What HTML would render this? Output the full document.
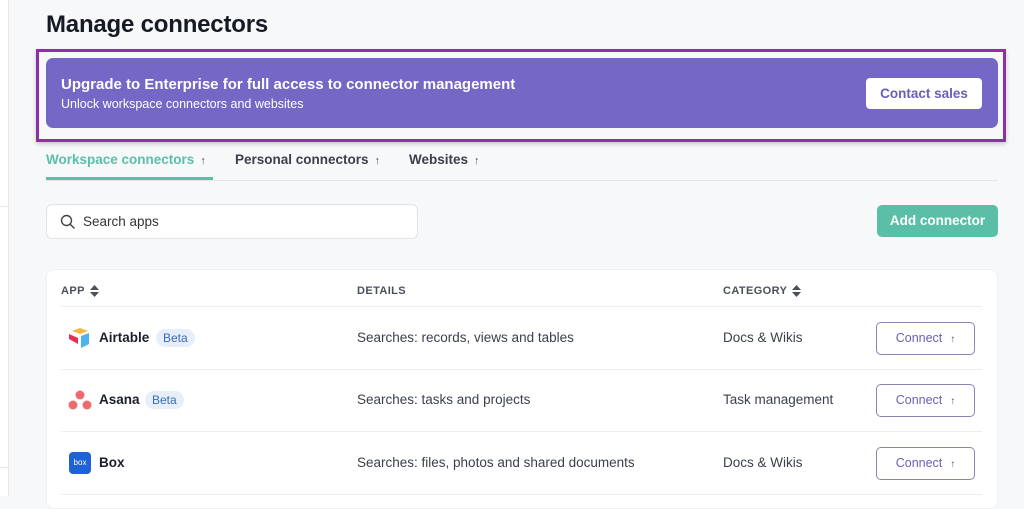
<!DOCTYPE html><html><head><style>
*{box-sizing:border-box;margin:0;padding:0}
body{width:1024px;height:496px;overflow:hidden;background:#f7f8fa;font-family:"Liberation Sans",sans-serif;position:relative;color:#1d2330}
.abs{position:absolute}
.lp{left:0;top:0;width:9px;height:496px;background:#fff;border-right:1px solid #e6e8ec}
h1{position:absolute;left:46px;top:11px;font-size:24px;font-weight:700;color:#151a24;letter-spacing:-0.2px}
.frame{left:36px;top:49px;width:970px;height:93px;border:3px solid #8e2fa8;box-shadow:0 2px 4px rgba(0,0,0,.2)}
.ban{left:46px;top:58px;width:952px;height:70px;background:#7467c6;border-radius:7px;color:#fff}
.ban .t{position:absolute;left:15px;top:18px;font-size:15px;font-weight:700}
.ban .s{position:absolute;left:15px;top:39px;font-size:12.5px}
.cs{position:absolute;left:820px;top:20px;width:116px;height:31px;background:#fff;border-radius:4px;color:#6a5fb8;font-weight:700;font-size:13.5px;text-align:center;line-height:31px}
.tab{top:152px;font-size:13.5px;font-weight:700;color:#3a3f4a}
.tab small{font-size:11px;margin-left:6px;color:#555}
.search{left:46px;top:204px;width:372px;height:35px;background:#fff;border:1px solid #dfe2e7;border-radius:6px}
.search span{position:absolute;left:36px;top:9px;font-size:13.5px;color:#333}
.add{left:877px;top:205px;width:121px;height:32px;background:#5bbfa8;border-radius:5px;color:#fff;font-weight:700;font-size:13.5px;text-align:center;line-height:32px}
.card{left:46px;top:269px;width:952px;height:240px;background:#fff;border-radius:8px;border:1px solid #eef0f3}
.hd{top:283px;height:16px;display:flex;align-items:center;font-size:11px;font-weight:700;color:#4a4f5a;letter-spacing:.4px}
.hd svg{margin-left:5px}
.line{left:61px;width:921px;height:1px;background:#eceef1}
.name{font-size:13.5px;font-weight:700;color:#1a1f29}
.beta{font-size:12px;color:#3b6bb0;background:#e6eff9;border-radius:10px;padding:2px 7px}
.txt{font-size:13.5px;color:#3a3f4a}
.btn{left:876px;width:99px;height:33px;border:1px solid #8a84b4;border-radius:5px;font-size:12.5px;color:#6a5fb8;text-align:center;line-height:31px}
.btn small{font-size:10px;margin-left:8px;color:#555}
</style></head><body>
<div class="abs lp"></div>
<div class="abs" style="left:0;top:206px;width:9px;height:1px;background:#e6e8ec"></div>
<div class="abs" style="left:0;top:467px;width:9px;height:1px;background:#e6e8ec"></div>
<h1>Manage connectors</h1>
<div class="abs frame"></div>
<div class="abs ban"><div class="t">Upgrade to Enterprise for full access to connector management</div><div class="s">Unlock workspace connectors and websites</div><div class="cs">Contact sales</div></div>
<div class="abs tab" style="left:46px;color:#5bbfa8">Workspace connectors<small>↑</small></div>
<div class="abs tab" style="left:235px">Personal connectors<small>↑</small></div>
<div class="abs tab" style="left:409px">Websites<small>↑</small></div>
<div class="abs" style="left:46px;top:180px;width:952px;height:1px;background:#e2e4e8"></div>
<div class="abs" style="left:46px;top:177px;width:167px;height:3px;background:#5bbfa8"></div>
<div class="abs search"><svg class="abs" style="left:13px;top:9px" width="16" height="16" viewBox="0 0 16 16"><circle cx="6.5" cy="6.5" r="5" fill="none" stroke="#444" stroke-width="1.4"/><path d="M10.2 10.2L14.5 14.5" stroke="#444" stroke-width="1.4"/></svg><span>Search apps</span></div>
<div class="abs add">Add connector</div>
<div class="abs card"></div>
<div class="abs hd" style="left:61px">APP<svg width="9" height="12" viewBox="0 0 9 12"><path d="M4.5 0L9 5H0Z M4.5 12L0 7H9Z" fill="#4a4f5a"/></svg></div>
<div class="abs hd" style="left:357px">DETAILS</div>
<div class="abs hd" style="left:723px">CATEGORY<svg width="9" height="12" viewBox="0 0 9 12"><path d="M4.5 0L9 5H0Z M4.5 12L0 7H9Z" fill="#4a4f5a"/></svg></div>
<div class="abs line" style="top:306px"></div>
<div class="abs line" style="top:369px"></div>
<div class="abs line" style="top:431px"></div>
<div class="abs line" style="top:494px"></div>
<svg class="abs" style="left:68px;top:327px" width="24" height="23" viewBox="0 0 24 23"><path d="M4 4L12 1L20 4L12 7Z" fill="#f4b942"/><path d="M13 9L21 6V17L13 21Z" fill="#4db3f0"/><path d="M1 7L10 11V17L1 12Z" fill="#e0334f"/></svg>
<div class="abs name" style="left:99px;top:330px">Airtable</div>
<div class="abs beta" style="left:156px;top:329px">Beta</div>
<svg class="abs" style="left:68px;top:389px" width="24" height="22" viewBox="0 0 24 22"><circle cx="12" cy="6" r="4.5" fill="#ec6a70"/><circle cx="5" cy="16" r="4.5" fill="#ec6a70"/><circle cx="19" cy="16" r="4.5" fill="#ec6a70"/></svg>
<div class="abs name" style="left:99px;top:392px">Asana</div>
<div class="abs beta" style="left:145px;top:391px">Beta</div>
<div class="abs" style="left:69px;top:452px;width:22px;height:22px;background:#1f62d8;border-radius:4px;color:#fff;font-size:8px;text-align:center;line-height:22px">box</div>
<div class="abs name" style="left:99px;top:455px">Box</div>
<div class="abs txt" style="left:357px;top:330px">Searches: records, views and tables</div>
<div class="abs txt" style="left:357px;top:392px">Searches: tasks and projects</div>
<div class="abs txt" style="left:357px;top:455px">Searches: files, photos and shared documents</div>
<div class="abs txt" style="left:723px;top:330px">Docs &amp; Wikis</div>
<div class="abs txt" style="left:723px;top:392px">Task management</div>
<div class="abs txt" style="left:723px;top:455px">Docs &amp; Wikis</div>
<div class="abs btn" style="top:322px">Connect<small>↑</small></div>
<div class="abs btn" style="top:384px">Connect<small>↑</small></div>
<div class="abs btn" style="top:447px">Connect<small>↑</small></div>
</body></html>
